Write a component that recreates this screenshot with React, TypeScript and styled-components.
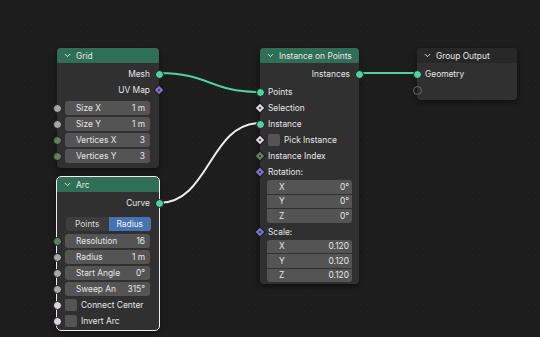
import styled, {createGlobalStyle, css} from 'styled-components';
import {ChevronDown} from 'lucide-react';

const GlobalStyle = createGlobalStyle`
	html, body {
		margin: 0;
		padding: 0;
		background: #1d1d1d;
	}
	* {
		box-sizing: border-box;
	}
`;

const GEO = '#4fd1a0';
const FLOAT = '#a8a8a8';
const INT = '#5e8261';
const VEC = '#7d70d6';
const BOOL = '#dcd4e0';

type SocketShape = 'circle' | 'diamond' | 'hollow';
type SocketSpec = {shape: SocketShape; color: string};

const sock = (shape: SocketShape, color: string): SocketSpec => ({shape, color});

function Socket({spec, side}: {spec: SocketSpec; side: 'in' | 'out'}) {
	return <SocketDot $shape={spec.shape} $color={spec.color} $side={side} />;
}

function NodeHeader({title, $green}: {title: string; $green?: boolean}) {
	return (
		<Header $green={$green}>
			<ChevronDown size={9} strokeWidth={2.5} />
			<span>{title}</span>
		</Header>
	);
}

function OutRow({label, spec}: {label: string; spec: SocketSpec}) {
	return (
		<Row $out>
			<span>{label}</span>
			<Socket spec={spec} side="out" />
		</Row>
	);
}

function InRow({label, spec}: {label: string; spec: SocketSpec}) {
	return (
		<Row>
			<Socket spec={spec} side="in" />
			<span>{label}</span>
		</Row>
	);
}

function FieldRow({label, value, spec}: {label: string; value: string; spec: SocketSpec}) {
	return (
		<Row>
			<Socket spec={spec} side="in" />
			<Field>
				<span>{label}</span>
				<span>{value}</span>
			</Field>
		</Row>
	);
}

function CheckRow({label, spec}: {label: string; spec: SocketSpec}) {
	return (
		<Row>
			<Socket spec={spec} side="in" />
			<CheckBox />
			<span>{label}</span>
		</Row>
	);
}

function VectorBlock({values}: {values: string[]}) {
	return (
		<Vector>
			{['X', 'Y', 'Z'].map((axis, i) => (
				<VectorCell key={axis}>
					<span>{axis}</span>
					<span>{values[i]}</span>
				</VectorCell>
			))}
		</Vector>
	);
}

function Links() {
	const curve = (x1: number, y1: number, x2: number, y2: number) => {
		const d = Math.max(30, (x2 - x1) * 0.5);
		return `M${x1} ${y1} C${x1 + d} ${y1}, ${x2 - d} ${y2}, ${x2} ${y2}`;
	};
	return (
		<LinkLayer width={540} height={337}>
			<path d={curve(159, 73, 260, 92)} stroke={GEO} strokeWidth={2} fill="none" />
			<path d={curve(159, 203, 260, 123)} stroke="#ececec" strokeWidth={2} fill="none" />
			<path d={curve(359, 73, 417, 73)} stroke={GEO} strokeWidth={2} fill="none" />
		</LinkLayer>
	);
}

function App() {
	return (
		<>
			<GlobalStyle />
			<Canvas>
				<Links />

				<Node $x={57} $y={48} $w={102}>
					<NodeHeader title="Grid" $green />
					<Body $pb={4}>
						<OutRow label="Mesh" spec={sock('circle', GEO)} />
						<OutRow label="UV Map" spec={sock('diamond', VEC)} />
						<Spacer $h={2} />
						<FieldRow label="Size X" value="1 m" spec={sock('circle', FLOAT)} />
						<FieldRow label="Size Y" value="1 m" spec={sock('circle', FLOAT)} />
						<FieldRow label="Vertices X" value="3" spec={sock('circle', INT)} />
						<FieldRow label="Vertices Y" value="3" spec={sock('circle', INT)} />
					</Body>
				</Node>

				<Node $x={57} $y={177} $w={102} $selected>
					<NodeHeader title="Arc" $green />
					<Body $pb={1}>
						<OutRow label="Curve" spec={sock('circle', GEO)} />
						<Toggle>
							<ToggleButton>Points</ToggleButton>
							<ToggleButton $active>Radius</ToggleButton>
						</Toggle>
						<FieldRow label="Resolution" value="16" spec={sock('circle', INT)} />
						<FieldRow label="Radius" value="1 m" spec={sock('circle', FLOAT)} />
						<FieldRow label="Start Angle" value="0°" spec={sock('circle', FLOAT)} />
						<FieldRow label="Sweep An" value="315°" spec={sock('circle', FLOAT)} />
						<CheckRow label="Connect Center" spec={sock('circle', BOOL)} />
						<CheckRow label="Invert Arc" spec={sock('circle', BOOL)} />
					</Body>
				</Node>

				<Node $x={260} $y={48} $w={99}>
					<NodeHeader title="Instance on Points" $green />
					<Body $pb={2}>
						<OutRow label="Instances" spec={sock('circle', GEO)} />
						<Spacer $h={2} />
						<InRow label="Points" spec={sock('circle', GEO)} />
						<InRow label="Selection" spec={sock('diamond', BOOL)} />
						<InRow label="Instance" spec={sock('circle', GEO)} />
						<CheckRow label="Pick Instance" spec={sock('diamond', BOOL)} />
						<InRow label="Instance Index" spec={sock('diamond', INT)} />
						<InRow label="Rotation:" spec={sock('diamond', VEC)} />
						<VectorBlock values={['0°', '0°', '0°']} />
						<Spacer $h={1} />
						<InRow label="Scale:" spec={sock('diamond', VEC)} />
						<VectorBlock values={['0.120', '0.120', '0.120']} />
					</Body>
				</Node>

				<Node $x={417} $y={48} $w={100}>
					<NodeHeader title="Group Output" />
					<Body $pb={2}>
						<InRow label="Geometry" spec={sock('circle', GEO)} />
						<InRow label="" spec={sock('hollow', '#6a6a6a')} />
					</Body>
				</Node>
			</Canvas>
		</>
	);
}

export default App;

const Canvas = styled.div`
	position: relative;
	width: 540px;
	height: 337px;
	overflow: hidden;
	background-color: #1d1d1d;
	background-image: radial-gradient(rgba(255, 255, 255, 0.03) 0.7px, transparent 1px);
	background-size: 7px 7px;
	font-family: Inter, 'Noto Sans', sans-serif;
	font-size: 8.4px;
	color: #e6e6e6;
`;

const LinkLayer = styled.svg`
	position: absolute;
	left: 0;
	top: 0;
	z-index: 0;
	pointer-events: none;
`;

const Node = styled.div<{$x: number; $y: number; $w: number; $selected?: boolean}>`
	position: absolute;
	left: ${p => p.$x}px;
	top: ${p => p.$y}px;
	width: ${p => p.$w}px;
	background: #303030;
	border-radius: 4px;
	box-shadow: 0 2px 6px rgba(0, 0, 0, 0.55);
	z-index: 1;
	${p =>
		p.$selected &&
		css`
			outline: 1px solid #f0f0f0;
		`}
`;

const Header = styled.div<{$green?: boolean}>`
	height: 15px;
	display: flex;
	align-items: center;
	gap: 4px;
	padding-left: 6px;
	border-radius: 4px 4px 0 0;
	background: ${p => (p.$green ? '#2f6e57' : '#282828')};
	color: #e8e8e8;
	white-space: nowrap;
`;

const Body = styled.div<{$pb: number}>`
	display: flex;
	flex-direction: column;
	padding: 3px 0 ${p => p.$pb}px;
`;

const Spacer = styled.div<{$h: number}>`
	height: ${p => p.$h}px;
	flex: none;
`;

const Row = styled.div<{$out?: boolean}>`
	position: relative;
	height: 16px;
	display: flex;
	align-items: center;
	gap: 4px;
	justify-content: ${p => (p.$out ? 'flex-end' : 'flex-start')};
	padding: 0 9px 0 8px;
	white-space: nowrap;
`;

const SocketDot = styled.div<{$shape: SocketShape; $color: string; $side: 'in' | 'out'}>`
	position: absolute;
	z-index: 3;
	top: 50%;
	${p => (p.$side === 'in' ? 'left: -4.5px;' : 'right: -4.5px;')}
	width: 9px;
	height: 9px;
	margin-top: -4.5px;
	border-radius: 50%;
	background: ${p => (p.$shape === 'hollow' ? 'transparent' : p.$color)};
	border: 1px solid ${p => (p.$shape === 'hollow' ? p.$color : '#1a1a1a')};
	${p =>
		p.$shape === 'diamond' &&
		css`
			width: 8px;
			height: 8px;
			margin-top: -4px;
			${p.$side === 'in' ? 'left: -4px;' : 'right: -4px;'}
			border-radius: 1px;
			transform: rotate(45deg);
			&::after {
				content: '';
				position: absolute;
				left: 2px;
				top: 2px;
				width: 2px;
				height: 2px;
				border-radius: 50%;
				background: #2a2a2a;
			}
		`}
`;

const Field = styled.div`
	flex: 1;
	height: 14px;
	display: flex;
	align-items: center;
	justify-content: space-between;
	padding: 0 5px 0 11px;
	background: #545454;
	border-radius: 3px;
	color: #e6e6e6;
`;

const CheckBox = styled.div`
	width: 12px;
	height: 12px;
	flex: none;
	background: #545454;
	border-radius: 2px;
`;

const Toggle = styled.div`
	display: flex;
	height: 14px;
	margin: 6px 8px 2px 9px;
	border-radius: 3px;
	overflow: hidden;
`;

const ToggleButton = styled.div<{$active?: boolean}>`
	flex: 1;
	display: flex;
	align-items: center;
	justify-content: center;
	background: ${p => (p.$active ? '#4772b3' : '#3d3d3d')};
	color: ${p => (p.$active ? '#f2f2f2' : '#d8d8d8')};
`;

const Vector = styled.div`
	display: flex;
	flex-direction: column;
	gap: 1px;
	margin: 0 7px 0 7px;
`;

const VectorCell = styled.div`
	height: 13.5px;
	display: flex;
	align-items: center;
	justify-content: space-between;
	padding: 0 3px 0 12px;
	background: #545454;
	color: #e6e6e6;

	&:first-child {
		border-radius: 3px 3px 0 0;
	}
	&:last-child {
		border-radius: 0 0 3px 3px;
	}
`;
